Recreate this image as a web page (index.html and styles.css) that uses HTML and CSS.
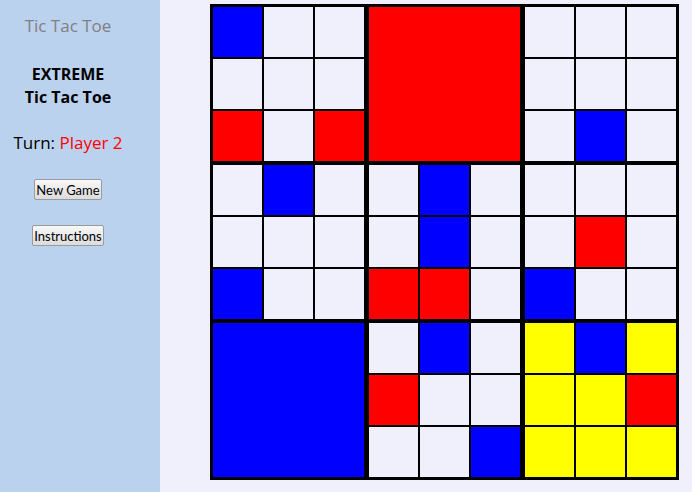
FILE: index.html
```html
<!DOCTYPE html>
<html>
<head>
<meta charset="utf-8">
<title>Tic Tac Toe</title>
<link rel="stylesheet" href="styles.css">
</head>
<body>
<aside class="sidebar">
  <div class="logo">Tic Tac Toe</div>
  <h1 class="heading">EXTREME<br>Tic Tac Toe</h1>
  <div class="turn">Turn: <span class="player">Player 2</span></div>
  <button class="btn btn-new">New Game</button>
  <button class="btn btn-instr">Instructions</button>
</aside>
<main class="main">
  <div class="board">
    <div class="sub">
      <div class="cell b"></div><div class="cell"></div><div class="cell"></div>
      <div class="cell"></div><div class="cell"></div><div class="cell"></div>
      <div class="cell r"></div><div class="cell"></div><div class="cell r"></div>
    </div>
    <div class="sub won r"></div>
    <div class="sub">
      <div class="cell"></div><div class="cell"></div><div class="cell"></div>
      <div class="cell"></div><div class="cell"></div><div class="cell"></div>
      <div class="cell"></div><div class="cell b"></div><div class="cell"></div>
    </div>
    <div class="sub">
      <div class="cell"></div><div class="cell b"></div><div class="cell"></div>
      <div class="cell"></div><div class="cell"></div><div class="cell"></div>
      <div class="cell b"></div><div class="cell"></div><div class="cell"></div>
    </div>
    <div class="sub">
      <div class="cell"></div><div class="cell b"></div><div class="cell"></div>
      <div class="cell"></div><div class="cell b"></div><div class="cell"></div>
      <div class="cell r"></div><div class="cell r"></div><div class="cell"></div>
    </div>
    <div class="sub">
      <div class="cell"></div><div class="cell"></div><div class="cell"></div>
      <div class="cell"></div><div class="cell r"></div><div class="cell"></div>
      <div class="cell b"></div><div class="cell"></div><div class="cell"></div>
    </div>
    <div class="sub won b"></div>
    <div class="sub">
      <div class="cell"></div><div class="cell b"></div><div class="cell"></div>
      <div class="cell r"></div><div class="cell"></div><div class="cell"></div>
      <div class="cell"></div><div class="cell"></div><div class="cell b"></div>
    </div>
    <div class="sub active">
      <div class="cell y"></div><div class="cell b"></div><div class="cell y"></div>
      <div class="cell y"></div><div class="cell y"></div><div class="cell r"></div>
      <div class="cell y"></div><div class="cell y"></div><div class="cell y"></div>
    </div>
  </div>
</main>
</body>
</html>
```
FILE: styles.css
```css
html, body {
  margin: 0;
  padding: 0;
  height: 100%;
}
body {
  display: flex;
  background: #f0f0fc;
  font-family: "Open Sans", "DejaVu Sans", sans-serif;
  font-size: 17px;
  color: #000;
}
.sidebar {
  width: 160px;
  box-sizing: border-box;
  padding-right: 24px;
  background: #bbd2ee;
  display: flex;
  flex-direction: column;
  align-items: center;
  flex: none;
}
.logo {
  margin-top: 15px;
  line-height: 22px;
  color: #808080;
}
.heading {
  margin: 26px 0 0;
  font-size: 16px;
  font-weight: bold;
  line-height: 23px;
  text-align: center;
}
.turn {
  margin-top: 23px;
  line-height: 22px;
}
.player {
  color: #ff0000;
}
.btn {
  height: 21px;
  padding: 0 1px;
  font-family: Lato, "DejaVu Sans", sans-serif;
  font-size: 13px;
  color: #000;
  background: linear-gradient(#f8f8f8, #dcdcdc);
  border: 1px solid #9a9a9a;
  border-radius: 2px;
}
.btn-new {
  margin-top: 25px;
}
.btn-instr {
  margin-top: 25px;
}
.main {
  flex: 1;
  padding: 4px 0 0 50px;
}
.board {
  display: grid;
  grid-template-columns: repeat(3, 151px);
  grid-template-rows: repeat(3, 154px);
  column-gap: 5px;
  row-gap: 4px;
  padding: 3px;
  background: #000;
  width: max-content;
}
.sub {
  display: grid;
  grid-template-columns: repeat(3, 1fr);
  grid-template-rows: repeat(3, 1fr);
  gap: 2px;
  background: #000;
}
.cell {
  background: #f0f0fc;
}
.r { background: #ff0000; }
.b { background: #0000ff; }
.y { background: #ffff00; }
```
